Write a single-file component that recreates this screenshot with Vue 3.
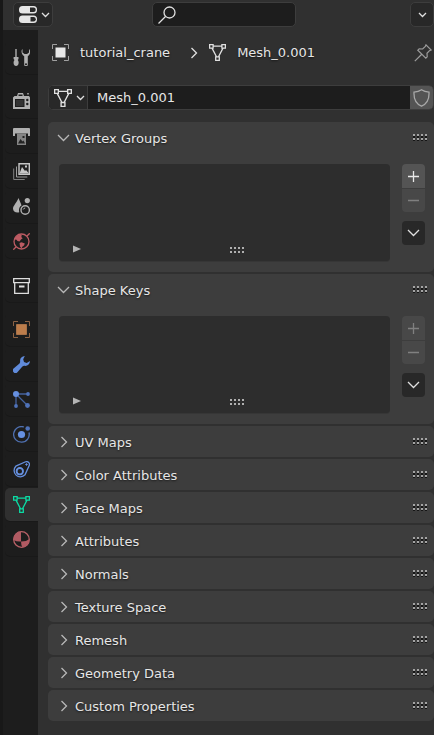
<script setup>
import { ref, reactive } from 'vue'

const meshName = ref('Mesh_0.001')
const query = ref('')
const activeTab = ref('Data')

const tabGroups = [
  ['Tool'],
  ['Render', 'Output', 'View Layer', 'Scene', 'World'],
  ['Collection'],
  ['Object', 'Modifiers', 'Particles', 'Physics', 'Constraints', 'Data', 'Material'],
]

const panels = reactive([
  { title: 'Vertex Groups', open: true, list: true, canAdd: true },
  { title: 'Shape Keys', open: true, list: true, canAdd: false },
  { title: 'UV Maps', open: false },
  { title: 'Color Attributes', open: false },
  { title: 'Face Maps', open: false },
  { title: 'Attributes', open: false },
  { title: 'Normals', open: false },
  { title: 'Texture Space', open: false },
  { title: 'Remesh', open: false },
  { title: 'Geometry Data', open: false },
  { title: 'Custom Properties', open: false },
])
</script>

<template>
  <div class="editor">
    <header class="topbar">
      <button class="box editor-type" aria-label="Editor type">
        <svg width="18" height="17" viewBox="0 0 18 17">
          <rect x="0" y="0" width="18" height="7.500" rx="3.500" fill="#e6e6e6" />
          <path d="M11 1.500h3.500a2.200 2.200 0 0 1 0 4.500H11z" fill="#282828" />
          <rect x="0" y="9.500" width="18" height="7.500" rx="3.500" fill="#e6e6e6" />
          <path d="M11.500 11h3a2.200 2.200 0 0 1 0 4.500h-3z" fill="#282828" />
        </svg>
        <svg width="9" height="6" viewBox="0 0 9 6" class="line"><path d="M1 1l3.500 3.500L8 1" /></svg>
      </button>
      <label class="box search">
        <svg width="18" height="18" viewBox="0 0 18 18" class="line">
          <circle cx="11.500" cy="6.500" r="5.500" /><path d="M7.500 10.500L.5 17.500" />
        </svg>
        <input v-model="query" type="text" aria-label="Search" />
      </label>
      <button class="box options" aria-label="Options">
        <svg width="9" height="6" viewBox="0 0 9 6" class="line"><path d="M1 1l3.500 3.500L8 1" /></svg>
      </button>
    </header>

    <div class="body">
      <nav class="tabs" aria-label="Properties">
        <div v-for="(group, g) in tabGroups" :key="g" class="group">
          <button
            v-for="tab in group"
            :key="tab"
            class="tab"
            :class="{ active: tab === activeTab }"
            :aria-label="tab"
            @click="activeTab = tab"
          >
            <svg width="17" height="17" viewBox="0 0 17 17" fill="none">
              <g v-if="tab === 'Tool'" fill="#b0b0b0">
                <path d="M2.300 0h1.400v8H5.500v2L4.700 11c1.600 1.500 1.300 6-1.600 6S0 12.500 1.500 11L.6 10V8h1.700z" />
                <path fill-rule="evenodd" d="M9.500 0v3.500l2 1.500h2.500l2-1.500V0c1.500 1 1.800 5.500-1.200 7.200v8.300a1.800 1.800 0 0 1-3.600 0V7.200C8 5.500 8 1 9.500 0zM13 14.200a1 1 0 1 0 0 2 1 1 0 0 0 0-2z" />
              </g>
              <g v-else-if="tab === 'Render'">
                <path d="M0 4.500L1.500 3H4l1-3h5l1 3h5l1 1.500V16H0z" fill="#b0b0b0" />
                <path d="M5.500 1.500h4V3h-4zM2 6h9.500v8H2z" fill="#1d1d1d" />
                <path d="M3 8h7.500M3 10h7.500M3 12h7.500" stroke="#555" stroke-width=".8" />
                <path d="M14 0h2v1.500h-2z" fill="#888" />
                <circle cx="14.300" cy="7" r="1.200" fill="#1d1d1d" /><circle cx="14.300" cy="11" r="1.200" fill="#1d1d1d" />
              </g>
              <g v-else-if="tab === 'Output'">
                <path d="M0 1q0-1 1-1h15q1 0 1 1v7h-2V5.500H2V8H0z" fill="#b0b0b0" />
                <path d="M4 5.500h9V17H4z" fill="#858585" />
                <path d="M5 15.500l2.500-4.500 2 2.500 1-1 1.500 3zM9.500 8h2v2h-2z" fill="#242424" />
              </g>
              <g v-else-if="tab === 'View Layer'">
                <path d="M6 .7h10.300v10.600H6z" fill="#202020" stroke="#c6c6c6" stroke-width="1.400" />
                <path d="M6.500 10.500L9 4l3 4 1-1 3 3.500zM12 2.500h2v2h-2z" fill="#c6c6c6" />
                <path d="M3.500 3.500v10.500h10.800" stroke="#9a9a9a" /><path d="M.7 5.500v11h11" stroke="#808080" />
              </g>
              <g v-else-if="tab === 'Scene'">
                <path d="M5.500 0C4 4 0 8 0 10.500c0 3 3 4.500 6.200 3.700C5.500 11 6.500 8.500 8.500 7.500 8 5 6.500 3 5.500 0z" fill="#b0b0b0" />
                <circle cx="14.300" cy="2.600" r="2.600" fill="#b0b0b0" />
                <circle cx="12.200" cy="12" r="4.200" stroke="#b0b0b0" stroke-width="1.400" />
                <path d="M10.200 11.500q.5-1.500 2-1.500" stroke="#b0b0b0" />
              </g>
              <g v-else-if="tab === 'World'">
                <circle cx="8.500" cy="8.500" r="7.500" stroke="#bd5b63" stroke-width="1.300" />
                <path d="M1.200 6.500L3 3.500 6.500 1.500 9 2.500 8.200 4l1.500 1.200L8 6.500 6.500 8.500 4.500 8 3.500 6.800zM6.500 10l2-.8 3.300 1.300-.8 2-1.500 1-1 2-1.500-2z" fill="#bd5b63" />
                <path d="M14 3l2.700-2.700M.3 16.700L3 14" stroke="#bd5b63" stroke-width="1.300" />
              </g>
              <g v-else-if="tab === 'Collection'" stroke="#dedede" stroke-width="1.300">
                <path d="M.7 1.700h15.600v4H.7zM1.700 6v10.300h13.600V6" />
                <path d="M6 8.500h5.500v2H6z" fill="#dedede" stroke="none" />
              </g>
              <g v-else-if="tab === 'Object'">
                <path d="M.5 5V.5H5M12 .5h4.500V5M16.500 12v4.500H12M5 16.500H.5V12" stroke="#8c6244" />
                <path d="M3.500 3.500h10v10h-10z" fill="#bd7d4b" stroke="#d08c58" stroke-width=".6" />
              </g>
              <path
                v-else-if="tab === 'Modifiers'"
                d="M11.800 0C8.500.3 6.500 2.500 7.200 6L6.500 7.500.6 12.500a2.600 2.600 0 0 0 3.800 3.800l5-5.800 1.600-.7c3.500.7 5.800-1.500 6-4.800l-3.300 2-2.700-.9-.8-2.800z"
                fill="#608bdb"
              />
              <g v-else-if="tab === 'Particles'">
                <path d="M3 3h12M3 3v12M5 5l9 9" stroke="#45639f" stroke-width="1.300" />
                <circle cx="3" cy="3" r="3" fill="#6690e0" />
                <g fill="#4f72b8"><circle cx="15" cy="3" r="1.900" /><circle cx="3" cy="15" r="1.900" /><circle cx="14.500" cy="14.500" r="2.400" /></g>
              </g>
              <g v-else-if="tab === 'Physics'">
                <path d="M11 1A7.800 7.800 0 1 0 16 6.500" stroke="#4f70b0" stroke-width="1.300" />
                <circle cx="8.500" cy="8.500" r="3.600" fill="#6690e0" /><circle cx="14.700" cy="2.500" r="2.300" fill="#4f72b8" />
              </g>
              <g v-else-if="tab === 'Constraints'" stroke="#6690e0">
                <path d="M2.800 5.200L12 1c3-1.200 5.500 1 4 4L12 13.800A6 6 0 1 1 2.800 5.200z" stroke-width="1.300" />
                <circle cx="6.800" cy="10.200" r="3.200" stroke-width="1.900" />
                <path d="M13.500 2.300v2.400M12.300 3.500h2.400" />
              </g>
              <path
                v-else-if="tab === 'Data'"
                d="M.6.600h3.500v3.500H.6zM12.900.6h3.500v3.500h-3.500zM6.700 12.800h3.600v3.600H6.700zM4.100 2.200h8.800M3 4.100l4.500 8.700M14 4.100l-4.500 8.700"
                stroke="#0bdba4"
                stroke-width="1.300"
              />
              <g v-else>
                <circle cx="8.500" cy="8.500" r="7.800" fill="#1d1d1d" stroke="#b86168" stroke-width="1.300" />
                <path d="M8 .5A8 8 0 0 0 .5 9Q4 11 8 10.500zM8 10.500q5 .2 8.500-2.500A8 8 0 0 1 9.500 16.500Q8 14 8 10.500z" fill="#b05a62" />
              </g>
            </svg>
          </button>
        </div>
      </nav>

      <main class="content">
        <div class="crumbs">
          <svg width="17" height="17" viewBox="0 0 17 17" fill="none">
            <path d="M.5 5V.5H5M12 .5h4.500V5M16.500 12v4.500H12M5 16.500H.5V12" stroke="#a0a0a0" />
            <path d="M3.500 3.500h10v10h-10z" fill="#e8e8e8" />
          </svg>
          <span class="crumb">tutorial_crane</span>
          <svg width="8" height="12" viewBox="0 0 8 12" class="line sep"><path d="M1.500 1l5 5-5 5" /></svg>
          <svg width="17" height="17" viewBox="0 0 17 17" class="line">
            <path d="M.6.600h3.500v3.500H.6zM12.900.6h3.500v3.500h-3.500zM6.700 12.800h3.600v3.600H6.700zM4.100 2.200h8.800M3 4.100l4.500 8.700M14 4.100l-4.500 8.700" />
          </svg>
          <span class="crumb">Mesh_0.001</span>
          <button class="pin" aria-label="Pin">
            <svg width="18" height="18" viewBox="0 0 18 18" fill="none" stroke="#9c9c9c" stroke-width="1.200">
              <path d="M12 .8l5.200 5.200-1.700.7-2.500 2.600.2 3.500-1.400 1.400L3.800 6.200l1.400-1.400 3.500.2 2.600-2.500zM7.500 10.500L.8 17.200" />
            </svg>
          </button>
        </div>

        <div class="datablock">
          <button class="browse" aria-label="Browse mesh data">
            <svg width="18" height="18" viewBox="0 0 17 17" class="line">
              <path d="M.6.600h3.500v3.500H.6zM12.900.6h3.500v3.500h-3.500zM6.700 12.800h3.600v3.600H6.700zM4.100 2.200h8.800M3 4.100l4.500 8.700M14 4.100l-4.500 8.700" />
            </svg>
            <svg width="9" height="6" viewBox="0 0 9 6" class="line"><path d="M1 1l3.500 3.500L8 1" /></svg>
          </button>
          <input v-model="meshName" class="name" type="text" aria-label="Mesh name" />
          <button class="fake" aria-label="Fake user">
            <svg width="17" height="18" viewBox="0 0 17 18" fill="none" stroke="#a8a8a8" stroke-width="1.300">
              <path d="M8.500.8Q11.500 3 16 3.200c.3 6-1 11.300-7.500 14C2 14.500.7 9.200 1 3.200 5.500 3 8.500.8 8.500.8z" />
            </svg>
          </button>
        </div>

        <section v-for="p in panels" :key="p.title" class="panel">
          <button class="head" :aria-expanded="p.open" @click="p.open = !p.open">
            <svg width="13" height="12" viewBox="0 0 13 12" class="arrow">
              <path v-if="p.open" d="M1 3l5.500 5.500L12 3" />
              <path v-else d="M4.500 1l5 5-5 5" />
            </svg>
            <span>{{ p.title }}</span>
            <svg width="14" height="7" viewBox="0 0 14 7" class="grip">
              <path d="M0 3h14M0 7h14" stroke="#151515" stroke-width="2" stroke-dasharray="2 2" />
              <path d="M0 1h14M0 5h14" stroke="#a4a4a4" stroke-width="2" stroke-dasharray="2 2" />
            </svg>
          </button>
          <div v-if="p.open && p.list" class="list-row">
            <div class="list" role="listbox" :aria-label="p.title">
              <svg width="8" height="8" viewBox="0 0 8 8"><path d="M0 .5L8 4 0 7.500z" fill="#b4b4b4" /></svg>
              <svg class="resize" width="14" height="6" viewBox="0 0 14 6">
                <path d="M0 1h14M0 5h14" stroke="#b0b0b0" stroke-width="2" stroke-dasharray="2 2" />
              </svg>
            </div>
            <div class="tools">
              <div class="pair">
                <button :disabled="!p.canAdd" aria-label="Add">
                  <svg width="13" height="13" viewBox="0 0 13 13"><path d="M6.500 1v11M1 6.500h11" /></svg>
                </button>
                <button disabled aria-label="Remove">
                  <svg width="13" height="13" viewBox="0 0 13 13"><path d="M1 6.500h11" /></svg>
                </button>
              </div>
              <button class="specials" aria-label="Specials">
                <svg width="13" height="8" viewBox="0 0 13 8" class="line"><path d="M1 1l5.500 5.500L12 1" /></svg>
              </button>
            </div>
          </div>
        </section>
      </main>
    </div>
  </div>
</template>

<style>
body {
  margin: 0;
  background: #303030;
}
</style>

<style scoped>
.editor {
  box-sizing: border-box;
  display: flex;
  flex-direction: column;
  min-height: 100vh;
  border-left: 3px solid #181818;
  background: #303030;
  color: #e6e6e6;
  font: 13px/16px "DejaVu Sans", sans-serif;
}
.editor * {
  box-sizing: border-box;
}
button,
input {
  margin: 0;
  padding: 0;
  border: 0;
  background: none;
  color: inherit;
  font: inherit;
}
svg {
  display: block;
  flex: none;
}
.line {
  fill: none;
  stroke: #e0e0e0;
  stroke-width: 1.3;
}
.topbar {
  display: grid;
  grid-template-columns: 1fr 144px 1fr;
  align-items: start;
  height: 30px;
  padding: 2px 0 0 10px;
}
.box {
  display: flex;
  align-items: center;
  height: 25px;
  border: 1px solid #3d3d3d;
  border-radius: 5px;
  background: #282828;
}
.editor-type {
  gap: 4px;
  width: 40px;
  padding-left: 5px;
}
.search {
  padding: 0 5px;
  gap: 6px;
  background: #1d1d1d;
}
.search input {
  flex: 1;
  min-width: 0;
  outline: 0;
}
.options {
  justify-content: center;
  justify-self: end;
  width: 24px;
}
.body {
  display: flex;
  flex: 1;
}
.tabs {
  display: flex;
  flex-direction: column;
  gap: 11px;
  width: 35px;
  padding: 11px 0 0 2px;
  background: #1d1d1d;
}
.group {
  display: flex;
  flex-direction: column;
  gap: 2px;
}
.tab {
  display: grid;
  place-items: center;
  height: 33px;
  border-radius: 5px 0 0 5px;
  box-shadow: 0 1px 0 #191919;
}
.tab.active {
  background: #303030;
}
.content {
  display: flex;
  flex: 1;
  flex-direction: column;
  gap: 2px;
  min-width: 0;
  padding: 10px 0 14px 10px;
}
.crumbs {
  display: flex;
  align-items: center;
  height: 25px;
  padding: 0 2px 0 4px;
  text-shadow: 0 1px 2px rgba(0, 0, 0, 0.6);
}
.crumb {
  margin-left: 11px;
}
.sep {
  margin: 0 11px 0 20px;
}
.pin {
  margin-left: auto;
}
.datablock {
  display: flex;
  height: 25px;
  margin: 18px 0 10px;
  border: 1px solid #3d3d3d;
  border-radius: 5px;
  background: #1d1d1d;
  overflow: hidden;
}
.browse {
  display: flex;
  align-items: center;
  gap: 4px;
  width: 39px;
  padding-left: 5px;
  border-right: 1px solid #3d3d3d;
  background: #282828;
}
.name {
  flex: 1;
  min-width: 0;
  padding-left: 9px;
  outline: 0;
}
.fake {
  display: grid;
  place-items: center;
  width: 23px;
  background: #545454;
}
.panel {
  border-radius: 5px;
  background: #3d3d3d;
}
.head {
  display: flex;
  align-items: center;
  gap: 5px;
  width: 100%;
  height: 31px;
  padding: 0 7px 0 9px;
  text-align: left;
  text-shadow: 0 1px 2px rgba(0, 0, 0, 0.6);
}
.head span {
  flex: 1;
  padding-top: 2px;
}
.arrow {
  fill: none;
  stroke: #b8b8b8;
  stroke-width: 1.3;
}
.list-row {
  display: flex;
  gap: 12px;
  padding: 11px 9px 11px 11px;
}
.list {
  display: grid;
  grid-template-columns: auto 1fr;
  gap: 2px;
  align-items: end;
  flex: 1;
  height: 97px;
  padding: 0 0 8px 14px;
  border-radius: 4px;
  background: #2d2d2d;
  box-shadow: 0 1px 0 #363636;
}
.resize {
  justify-self: center;
}
.tools {
  display: flex;
  flex-direction: column;
  gap: 9px;
  width: 23px;
}
.pair {
  display: grid;
  border-radius: 4px;
  overflow: hidden;
}
.pair button {
  display: grid;
  place-items: center;
  height: 24px;
  background: #545454;
}
.pair button + button {
  border-top: 1px solid #3d3d3d;
}
.pair path {
  fill: none;
  stroke: #e8e8e8;
  stroke-width: 1.3;
}
.pair button:disabled {
  background: #484848;
}
.pair button:disabled path {
  stroke: #808080;
}
.specials {
  display: grid;
  place-items: center;
  height: 24px;
  border-radius: 4px;
  background: #282828;
}
</style>
